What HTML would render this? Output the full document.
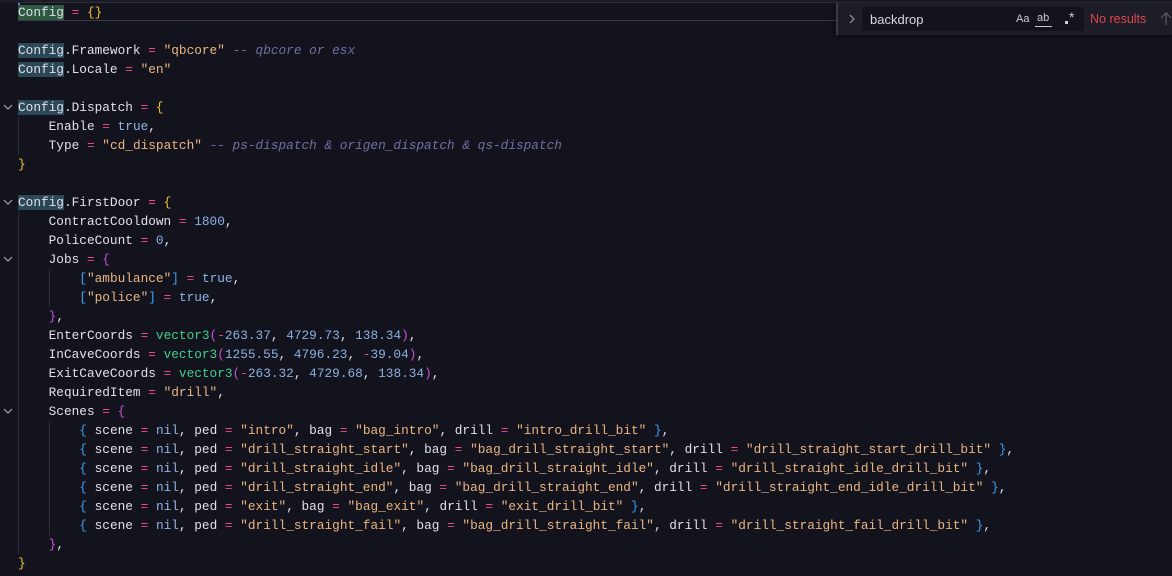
<!DOCTYPE html>
<html><head><meta charset="utf-8"><style>
html,body{margin:0;padding:0;width:1172px;height:576px;overflow:hidden;background:#13131d;}
.ed{position:absolute;left:0;top:0;width:1172px;height:576px;font-family:"Liberation Mono",monospace;font-size:12.77px;color:#e0e0ee;}
.l{position:absolute;left:18px;height:19px;line-height:19px;white-space:pre;margin-top:1px;}
.o{color:#f0488e}.s{color:#eab583}.n{color:#8ab0e0}.b{color:#90b4e8}.g{color:#3fcf8e}
.c{color:#6e72a0;font-style:italic}.y{color:#f2c230}.m{color:#c94fd6}.u{color:#3b9ef2}
.h{background:#2b4856}.h0{background:#2e5a40}
.chev{position:absolute;left:2px;width:12px;height:19px;}
.guide{position:absolute;width:1px;background:#2c2c3a;}
</style></head><body><div class="ed">
<div style="position:absolute;left:0;top:0;width:1172px;height:3px;background:#1c1c26"></div>
<div style="position:absolute;left:18px;top:2px;width:1154px;height:17px;border-top:1px solid #2e2e3c;border-bottom:1px solid #3a3a4a"></div>
<div style="position:absolute;left:18px;top:3px;width:2px;height:17px;background:#7a6ae0"></div>
<div class="guide" style="left:18px;top:117px;height:38px"></div>
<div class="guide" style="left:18px;top:212px;height:342px"></div>
<div class="guide" style="left:49px;top:269px;height:38px"></div>
<div class="guide" style="left:49px;top:421px;height:114px"></div>
<svg class="chev" style="top:98px" viewBox="0 0 12 19"><path d="M2 7l4 4 4-4" stroke="#a0a0b0" fill="none" stroke-width="1.2"/></svg>
<svg class="chev" style="top:193px" viewBox="0 0 12 19"><path d="M2 7l4 4 4-4" stroke="#a0a0b0" fill="none" stroke-width="1.2"/></svg>
<svg class="chev" style="top:250px" viewBox="0 0 12 19"><path d="M2 7l4 4 4-4" stroke="#a0a0b0" fill="none" stroke-width="1.2"/></svg>
<svg class="chev" style="top:402px" viewBox="0 0 12 19"><path d="M2 7l4 4 4-4" stroke="#a0a0b0" fill="none" stroke-width="1.2"/></svg>

<div class="l" style="top:2px"><span class="h0">Config</span> <span class="o">=</span> <span class="y">{}</span></div>
<div class="l" style="top:40px"><span class="h">Config</span>.Framework <span class="o">=</span> <span class="s">"qbcore"</span> <span class="c">-- qbcore or esx</span></div>
<div class="l" style="top:59px"><span class="h">Config</span>.Locale <span class="o">=</span> <span class="s">"en"</span></div>
<div class="l" style="top:97px"><span class="h">Config</span>.Dispatch <span class="o">=</span> <span class="y">{</span></div>
<div class="l" style="top:116px">    Enable <span class="o">=</span> <span class="b">true</span>,</div>
<div class="l" style="top:135px">    Type <span class="o">=</span> <span class="s">"cd_dispatch"</span> <span class="c">-- ps-dispatch &amp; origen_dispatch &amp; qs-dispatch</span></div>
<div class="l" style="top:154px"><span class="y">}</span></div>
<div class="l" style="top:192px"><span class="h">Config</span>.FirstDoor <span class="o">=</span> <span class="y">{</span></div>
<div class="l" style="top:211px">    ContractCooldown <span class="o">=</span> <span class="n">1800</span>,</div>
<div class="l" style="top:230px">    PoliceCount <span class="o">=</span> <span class="n">0</span>,</div>
<div class="l" style="top:249px">    Jobs <span class="o">=</span> <span class="m">{</span></div>
<div class="l" style="top:268px">        <span class="u">[</span><span class="s">"ambulance"</span><span class="u">]</span> <span class="o">=</span> <span class="b">true</span>,</div>
<div class="l" style="top:287px">        <span class="u">[</span><span class="s">"police"</span><span class="u">]</span> <span class="o">=</span> <span class="b">true</span>,</div>
<div class="l" style="top:306px">    <span class="m">}</span>,</div>
<div class="l" style="top:325px">    EnterCoords <span class="o">=</span> <span class="g">vector3</span><span class="m">(</span><span class="o">-</span><span class="n">263.37</span>, <span class="n">4729.73</span>, <span class="n">138.34</span><span class="m">)</span>,</div>
<div class="l" style="top:344px">    InCaveCoords <span class="o">=</span> <span class="g">vector3</span><span class="m">(</span><span class="n">1255.55</span>, <span class="n">4796.23</span>, <span class="o">-</span><span class="n">39.04</span><span class="m">)</span>,</div>
<div class="l" style="top:363px">    ExitCaveCoords <span class="o">=</span> <span class="g">vector3</span><span class="m">(</span><span class="o">-</span><span class="n">263.32</span>, <span class="n">4729.68</span>, <span class="n">138.34</span><span class="m">)</span>,</div>
<div class="l" style="top:382px">    RequiredItem <span class="o">=</span> <span class="s">"drill"</span>,</div>
<div class="l" style="top:401px">    Scenes <span class="o">=</span> <span class="m">{</span></div>
<div class="l" style="top:420px">        <span class="u">{</span> scene <span class="o">=</span> <span class="b">nil</span>, ped <span class="o">=</span> <span class="s">"intro"</span>, bag <span class="o">=</span> <span class="s">"bag_intro"</span>, drill <span class="o">=</span> <span class="s">"intro_drill_bit"</span> <span class="u">}</span>,</div>
<div class="l" style="top:439px">        <span class="u">{</span> scene <span class="o">=</span> <span class="b">nil</span>, ped <span class="o">=</span> <span class="s">"drill_straight_start"</span>, bag <span class="o">=</span> <span class="s">"bag_drill_straight_start"</span>, drill <span class="o">=</span> <span class="s">"drill_straight_start_drill_bit"</span> <span class="u">}</span>,</div>
<div class="l" style="top:458px">        <span class="u">{</span> scene <span class="o">=</span> <span class="b">nil</span>, ped <span class="o">=</span> <span class="s">"drill_straight_idle"</span>, bag <span class="o">=</span> <span class="s">"bag_drill_straight_idle"</span>, drill <span class="o">=</span> <span class="s">"drill_straight_idle_drill_bit"</span> <span class="u">}</span>,</div>
<div class="l" style="top:477px">        <span class="u">{</span> scene <span class="o">=</span> <span class="b">nil</span>, ped <span class="o">=</span> <span class="s">"drill_straight_end"</span>, bag <span class="o">=</span> <span class="s">"bag_drill_straight_end"</span>, drill <span class="o">=</span> <span class="s">"drill_straight_end_idle_drill_bit"</span> <span class="u">}</span>,</div>
<div class="l" style="top:496px">        <span class="u">{</span> scene <span class="o">=</span> <span class="b">nil</span>, ped <span class="o">=</span> <span class="s">"exit"</span>, bag <span class="o">=</span> <span class="s">"bag_exit"</span>, drill <span class="o">=</span> <span class="s">"exit_drill_bit"</span> <span class="u">}</span>,</div>
<div class="l" style="top:515px">        <span class="u">{</span> scene <span class="o">=</span> <span class="b">nil</span>, ped <span class="o">=</span> <span class="s">"drill_straight_fail"</span>, bag <span class="o">=</span> <span class="s">"bag_drill_straight_fail"</span>, drill <span class="o">=</span> <span class="s">"drill_straight_fail_drill_bit"</span> <span class="u">}</span>,</div>
<div class="l" style="top:534px">    <span class="m">}</span>,</div>
<div class="l" style="top:553px"><span class="y">}</span></div>

<div style="position:absolute;left:836px;top:3px;width:336px;height:32px;background:#1d1d28;box-shadow:0 2px 6px rgba(0,0,0,.5);font-family:'Liberation Sans',sans-serif;">
  <div style="position:absolute;left:0;top:0;width:2px;height:32px;background:#3a3a48"></div>
  <svg style="position:absolute;left:12px;top:10px" width="8" height="12" viewBox="0 0 8 12"><path d="M2 2l4 4-4 4" stroke="#9a9aa8" fill="none" stroke-width="1.2"/></svg>
  <div style="position:absolute;left:26px;top:4px;width:222px;height:24px;background:#13131d;border-radius:2px"></div>
  <div style="position:absolute;left:34px;top:9px;font-size:13px;color:#d8d8e4">backdrop</div>
  <div style="position:absolute;left:180px;top:10px;font-size:11px;color:#c8c8d4">Aa</div>
  <div style="position:absolute;left:201px;top:9px;font-size:11px;color:#c8c8d4">ab</div>
  <div style="position:absolute;left:199px;top:23px;width:17px;height:1px;background:#c8c8d4"></div>
  <div style="position:absolute;left:229px;top:18px;width:3px;height:3px;background:#d0d0dc"></div>
  <div style="position:absolute;left:233px;top:6px;font-size:14px;color:#d0d0dc">*</div>
  <div style="position:absolute;left:254px;top:9px;font-size:12.5px;color:#e0454a">No results</div>
  <svg style="position:absolute;left:324px;top:8px" width="12" height="16" viewBox="0 0 12 16"><path d="M6 2v12M1 7l5-5 5 5" stroke="#5a5a68" fill="none" stroke-width="1.2"/></svg>
</div>
</div></body></html>
